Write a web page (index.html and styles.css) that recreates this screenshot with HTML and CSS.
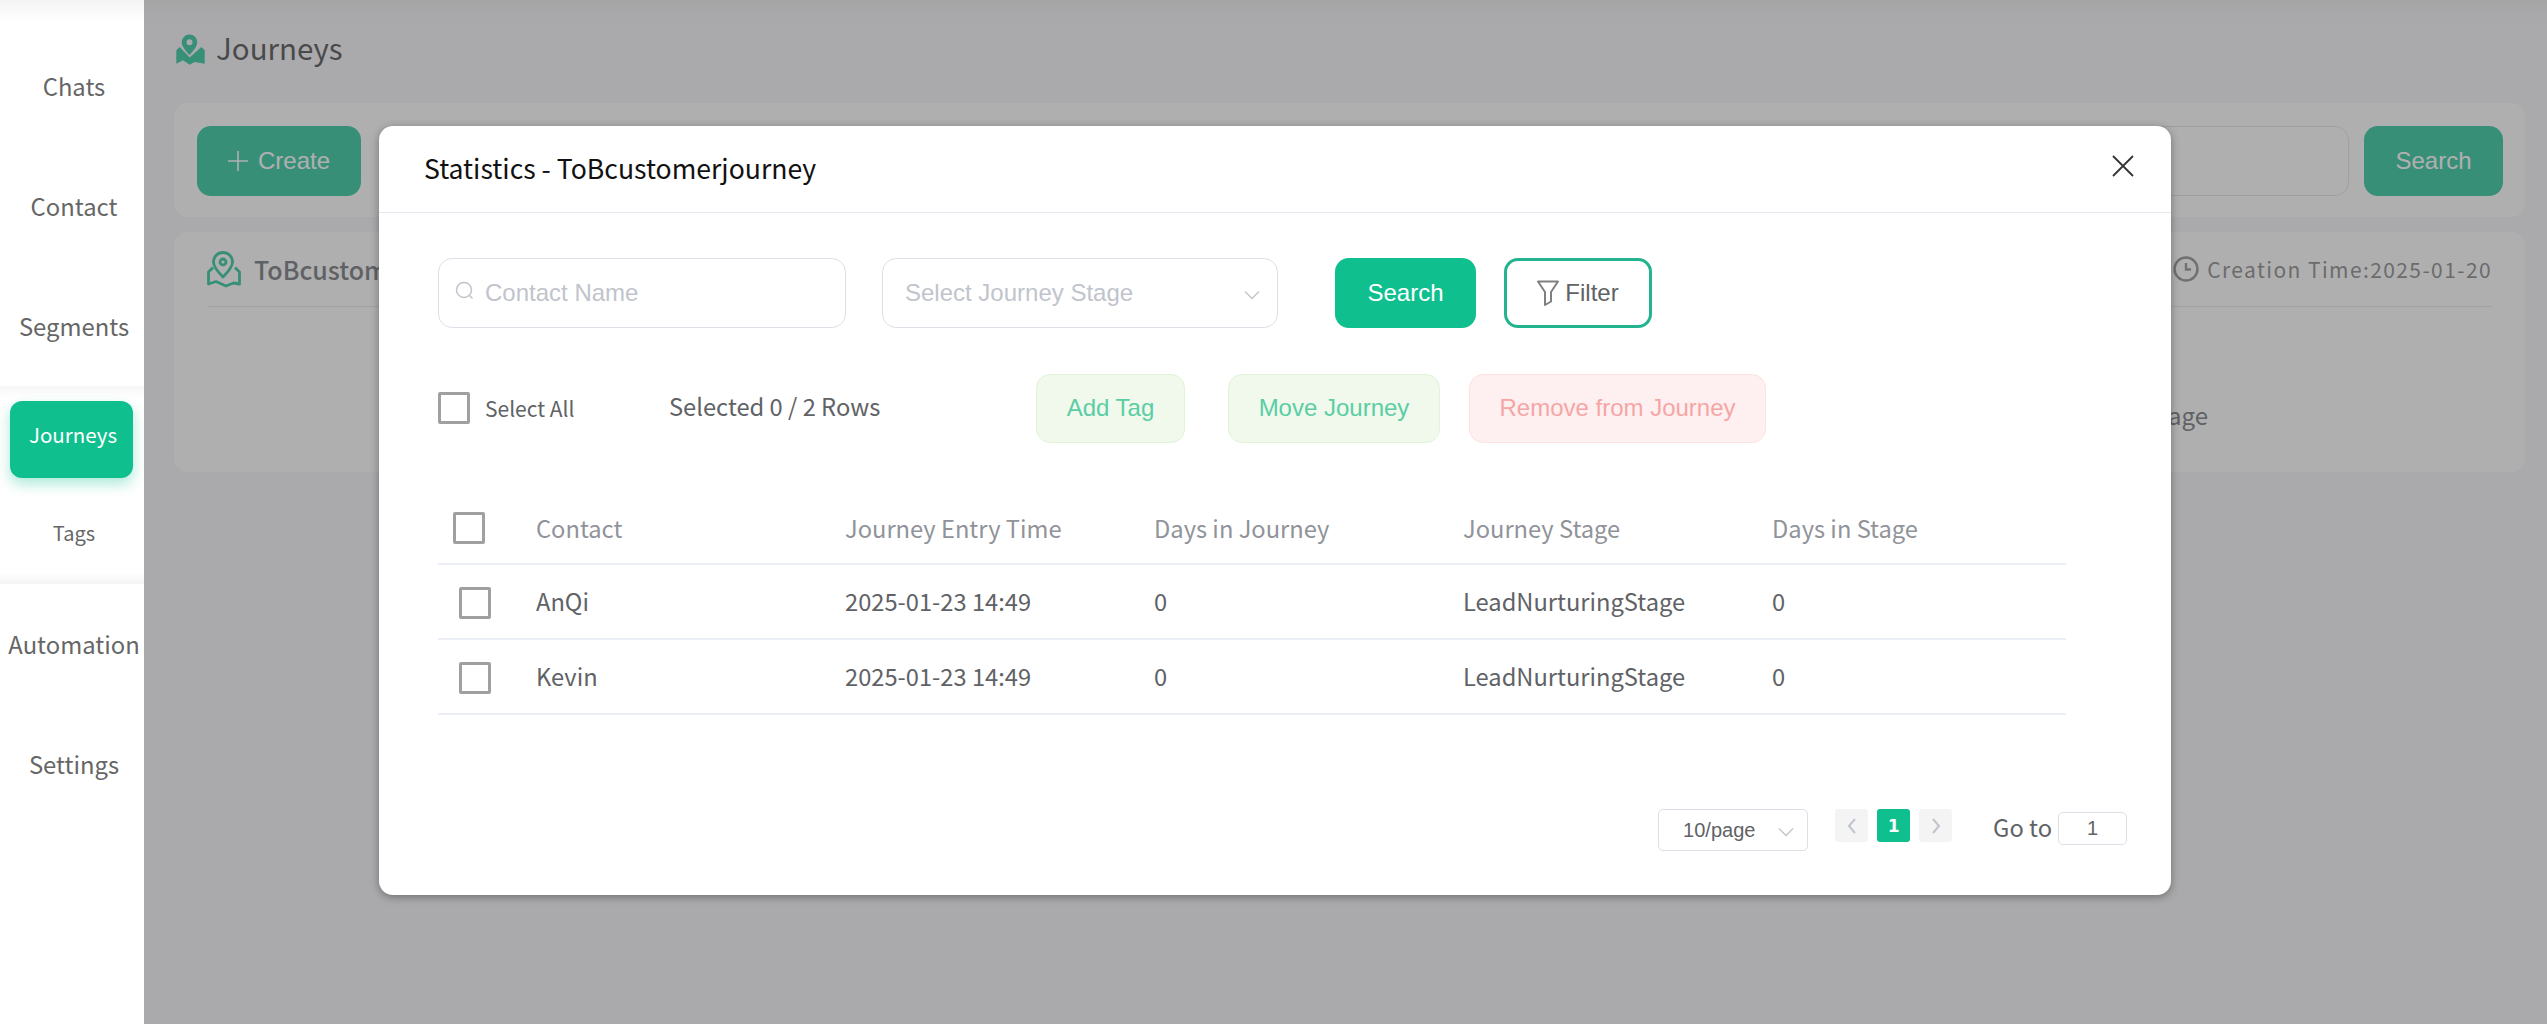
FILE: index.html
```html
<!DOCTYPE html>
<html lang="en">
<head>
    <meta charset="UTF-8">
    <title>Journeys</title>
    <link rel="stylesheet" href="styles.css">
</head>
<body>
    <div class="app">
        <aside class="sidebar">
            <a class="nav-item">Chats</a>
            <a class="nav-item">Contact</a>
            <a class="nav-item">Segments</a>
            <div class="nav-group">
                <a class="nav-pill">Journeys</a>
                <a class="nav-sub">Tags</a>
            </div>
            <a class="nav-item">Automation</a>
            <a class="nav-item">Settings</a>
        </aside>

        <main class="content">
            <div class="page-title">
                <svg class="page-icon" viewBox="0 0 29 31">
                    <path fill="#0fbf8e" fill-rule="evenodd" d="M13.500 0.500a7.800 7.800 0 0 1 7.800 7.800c0 3.500-3.300 8-7.800 12.700C9 16.300 5.700 11.800 5.700 8.300A7.800 7.800 0 0 1 13.500 0.500zm0 4.800a3 3 0 1 0 0 6 3 3 0 0 0 0-6z"/>
                    <path fill="#0fbf8e" d="M3.700 13L13.700 23.500 25.300 13l3.400 3.300v13.400L18.700 28l-5 2.700L7 26.300 0.300 29.700V16.300z"/>
                </svg>
                <span>Journeys</span>
            </div>

            <section class="card toolbar">
                <button class="btn-solid btn-create">
                    <svg class="plus-icon" viewBox="0 0 20 20" fill="none" stroke="#ffffff" stroke-width="1.600">
                        <path d="M10 0v20M0 10h20"/>
                    </svg>
                    Create
                </button>
                <div class="toolbar-right">
                    <div class="toolbar-input"></div>
                    <button class="btn-solid btn-find">Search</button>
                </div>
            </section>

            <section class="card journey">
                <div class="journey-head">
                    <svg class="journey-icon" viewBox="0 0 34 37" fill="none" stroke="#0fbf8e" stroke-width="2.800" stroke-linejoin="round">
                        <path d="M16 1.500a9.500 9.500 0 0 1 9.500 9.500c0 4.500-3.500 9-9.500 15C10 20 6.500 15.500 6.500 11A9.500 9.500 0 0 1 16 1.500z"/>
                        <circle cx="16" cy="11" r="3"/>
                        <path d="M6 16.500L1.500 21V33l7.500-2.500L19 35l7.500-3 6 1V21L28 16.500"/>
                    </svg>
                    <span class="journey-name">ToBcustomerjourney</span>
                    <span class="journey-time">
                        <svg class="clock-icon" viewBox="0 0 26 26" fill="none" stroke="#808080" stroke-width="2.400">
                            <circle cx="13" cy="13" r="11.500"/>
                            <path d="M13 7v6.500h5"/>
                        </svg>
                        Creation Time:2025-01-20
                    </span>
                </div>
                <div class="journey-stage">LeadNurturingStage</div>
            </section>
        </main>

        <div class="overlay">
            <div class="modal">
                <header class="modal-head">
                    <h2 class="modal-title">Statistics - ToBcustomerjourney</h2>
                    <svg class="modal-close" viewBox="0 0 22 22" fill="none" stroke="#333" stroke-width="1.800">
                        <path d="M1 1l20 20M21 1L1 21"/>
                    </svg>
                </header>

                <div class="modal-body">
                    <div class="filter-row">
                        <div class="field field-search">
                            <svg class="field-icon" viewBox="0 0 20 20" fill="none" stroke="#c0c4cc" stroke-width="1.500">
                                <circle cx="9" cy="9" r="7.500"/>
                                <path d="M14.500 14.500l3 3"/>
                            </svg>
                            <span>Contact Name</span>
                        </div>
                        <div class="field field-select">
                            <span>Select Journey Stage</span>
                            <svg class="chevron" viewBox="0 0 16 10" fill="none" stroke="#c0c4cc" stroke-width="1.300">
                                <path d="M1 1.500l7 7 7-7"/>
                            </svg>
                        </div>
                        <button class="btn btn-search">Search</button>
                        <button class="btn btn-filter">
                            <svg class="filter-icon" viewBox="0 0 22 26" fill="none" stroke="#808080" stroke-width="2" stroke-linejoin="round">
                                <path d="M1 1.500h20l-7 10.500v9.500l-6 3.500V12z"/>
                            </svg>
                            Filter
                        </button>
                    </div>

                    <div class="action-row">
                        <label class="select-all"><i class="check"></i>Select All</label>
                        <span class="selected-count">Selected 0 / 2 Rows</span>
                        <button class="btn btn-green btn-tag">Add Tag</button>
                        <button class="btn btn-green btn-move">Move Journey</button>
                        <button class="btn btn-red">Remove from Journey</button>
                    </div>

                    <div class="table">
                        <div class="table-row table-header">
                            <div class="cell-check head-check"><i class="check"></i></div>
                            <div>Contact</div>
                            <div>Journey Entry Time</div>
                            <div>Days in Journey</div>
                            <div>Journey Stage</div>
                            <div>Days in Stage</div>
                        </div>
                        <div class="table-row">
                            <div class="cell-check"><i class="check"></i></div>
                            <div>AnQi</div>
                            <div>2025-01-23 14:49</div>
                            <div>0</div>
                            <div>LeadNurturingStage</div>
                            <div>0</div>
                        </div>
                        <div class="table-row">
                            <div class="cell-check"><i class="check"></i></div>
                            <div>Kevin</div>
                            <div>2025-01-23 14:49</div>
                            <div>0</div>
                            <div>LeadNurturingStage</div>
                            <div>0</div>
                        </div>
                    </div>

                    <div class="pagination">
                        <div class="page-size">
                            <span>10/page</span>
                            <svg class="chevron" viewBox="0 0 16 10" fill="none" stroke="#c0c4cc" stroke-width="1.300">
                                <path d="M1 1.500l7 7 7-7"/>
                            </svg>
                        </div>
                        <div class="pager">
                            <span class="page-btn">
                                <svg viewBox="0 0 10 16" fill="none" stroke="#c0c4cc" stroke-width="2"><path d="M8 1L2 8l6 7"/></svg>
                            </span>
                            <span class="page-btn page-current">1</span>
                            <span class="page-btn">
                                <svg viewBox="0 0 10 16" fill="none" stroke="#c0c4cc" stroke-width="2"><path d="M2 1l6 7-6 7"/></svg>
                            </span>
                        </div>
                        <div class="goto">
                            <span class="goto-label">Go to</span>
                            <span class="goto-input">1</span>
                        </div>
                    </div>
                </div>
            </div>
        </div>
    </div>
</body>
</html>
```

FILE: styles.css
```css
* {
    box-sizing: border-box;
}

body {
    margin: 0;
    height: 100vh;
    overflow: hidden;
    font-family: "Noto Sans CJK SC", "Noto Sans", sans-serif;
    color: #606266;
}

button {
    font-family: "Liberation Sans", Arial, sans-serif;
}

.app {
    display: flex;
    height: 100%;
    position: relative;
}

/* sidebar stays above the overlay */
.sidebar {
    position: relative;
    z-index: 3;
    flex: 0 0 144px;
    padding-top: 27px;
    background: linear-gradient(#f4f4f4, #ffffff 22px);
}

.nav-item {
    display: flex;
    justify-content: center;
    align-items: center;
    height: 120px;
    padding: 0 0 3px 4px;
    font-size: 23.800px;
    color: #666666;
}

.nav-group {
    height: 198px;
    margin-top: -1px;
    margin-bottom: 1px;
    padding-top: 15px;
    background: linear-gradient(#f6f6f6, #ffffff 12px, #ffffff 186px, #f4f4f4);
}

.nav-pill {
    display: flex;
    justify-content: center;
    align-items: center;
    width: 123px;
    height: 77px;
    margin-left: 10px;
    padding: 0 0 12px 3px;
    border-radius: 12px;
    font-size: 20.500px;
    color: #ffffff;
    background-color: #0fbf8e;
    box-shadow: 0 6px 14px rgba(15, 191, 142, 0.35);
}

.nav-sub {
    display: flex;
    justify-content: center;
    align-items: center;
    height: 106px;
    padding: 3px 0 0 4px;
    font-size: 20px;
    color: #666666;
}

.content {
    flex: 1;
    padding: 0 22px 0 30px;
    background: linear-gradient(#ececec, #f4f4f6 24px);
}

.page-title {
    display: flex;
    align-items: center;
    gap: 11px;
    height: 103px;
    padding: 0 0 4px 2px;
    font-size: 29.500px;
    color: #333333;
}

.page-title span {
    margin-bottom: 5px;
}

.page-icon {
    width: 29px;
    height: 31px;
}

.card {
    background-color: #ffffff;
    border-radius: 14px;
}

.toolbar {
    display: flex;
    justify-content: space-between;
    height: 114px;
    padding: 23px 22px;
}

.toolbar-right {
    display: flex;
    gap: 15px;
}

.toolbar-input {
    width: 400px;
    height: 70px;
    border: 1px solid #dcdfe6;
    border-radius: 14px;
}

.btn-solid {
    height: 70px;
    border: none;
    border-radius: 14px;
    font-size: 24px;
    color: #ffffff;
    background-color: #0fbf8e;
}

.btn-create {
    display: flex;
    justify-content: center;
    align-items: center;
    gap: 10px;
    width: 164px;
    padding: 0;
    margin-left: 1px;
}

.plus-icon {
    width: 20px;
    height: 20px;
}

.btn-find {
    width: 139px;
}

.journey {
    height: 240px;
    margin-top: 15px;
    padding: 0 33px;
}

.journey-head {
    display: flex;
    align-items: center;
    height: 75px;
    border-bottom: 1px solid #e4e4e4;
}

.journey-icon {
    width: 34px;
    height: 37px;
    margin-right: 13px;
}

.journey-name {
    flex: 1;
    font-size: 25px;
    font-weight: 500;
    color: #606266;
}

.journey-time {
    display: flex;
    align-items: center;
    gap: 8px;
    font-size: 21px;
    letter-spacing: 1.400px;
    color: #777777;
}

.clock-icon {
    width: 26px;
    height: 26px;
}

.journey-stage {
    margin-top: 90px;
    padding-right: 284px;
    text-align: right;
    font-size: 24px;
}

.overlay {
    position: absolute;
    z-index: 2;
    top: 0;
    right: 0;
    bottom: 0;
    left: 144px;
    padding: 126px 0 0 235px;
    background-color: rgba(95, 95, 97, 0.5);
}

.modal {
    width: 1792px;
    height: 769px;
    border-radius: 14px;
    background-color: #ffffff;
    box-shadow: 0 2px 8px rgba(0, 0, 0, 0.35);
}

.modal-head {
    display: flex;
    justify-content: space-between;
    align-items: center;
    height: 87px;
    padding: 0 37px 0 45px;
    border-bottom: 1px solid #e4e7ed;
}

.modal-title {
    margin: 0 0 3px;
    font-size: 26.600px;
    font-weight: 400;
    color: #111111;
}

.modal-close {
    width: 22px;
    height: 22px;
    margin-bottom: 6px;
}

.modal-body {
    padding: 45px 44px 0 59px;
}

.filter-row {
    display: flex;
    align-items: stretch;
    height: 70px;
}

.field {
    display: flex;
    align-items: center;
    border: 1px solid #dcdfe6;
    border-radius: 14px;
    font-family: "Liberation Sans", Arial, sans-serif;
    font-size: 24px;
    color: #c0c4cc;
}

.field-search {
    width: 408px;
    padding-left: 16px;
}

.field-icon {
    width: 20px;
    height: 20px;
    margin: 0 10px 4px 0;
}

.field-select {
    justify-content: space-between;
    width: 396px;
    margin-left: 36px;
    padding: 0 17px 0 22px;
}

.chevron {
    width: 16px;
    height: 10px;
    margin-top: 4px;
}

.btn {
    border-radius: 14px;
    font-size: 24px;
}

.btn-search {
    width: 141px;
    margin-left: 57px;
    border: none;
    color: #ffffff;
    background-color: #0fbf8e;
}

.btn-filter {
    display: flex;
    justify-content: center;
    align-items: center;
    gap: 6px;
    width: 148px;
    margin-left: 28px;
    padding: 0;
    border: 3px solid #23b48f;
    color: #606266;
    background-color: #ffffff;
}

.filter-icon {
    width: 22px;
    height: 26px;
}

.action-row {
    display: flex;
    align-items: center;
    height: 70px;
    margin-top: 45px;
}

.select-all {
    display: flex;
    align-items: center;
    width: 231px;
    font-size: 21px;
}

.check {
    display: block;
    width: 32px;
    height: 32px;
    border: 3px solid #a0a0a0;
    border-radius: 2px;
    background-color: #ffffff;
}

.select-all .check {
    margin-right: 15px;
}

.selected-count {
    width: 367px;
    padding-bottom: 5px;
    font-size: 23.700px;
}

.btn-green,
.btn-red {
    height: 69px;
    padding: 0;
}

.btn-green {
    border: 1px solid #e1f3d8;
    color: #5bcda5;
    background-color: #f0f9eb;
}

.btn-tag {
    width: 149px;
}

.btn-move {
    width: 212px;
    margin-left: 43px;
}

.btn-red {
    width: 297px;
    margin-left: 29px;
    border: 1px solid #fde2e2;
    color: #f6a5a5;
    background-color: #fef0f0;
}

.table {
    width: 1628px;
    margin-top: 49px;
    font-size: 23.700px;
}

.table-row {
    display: grid;
    grid-template-columns: 98px 309px 309px 309px 309px 1fr;
    align-items: center;
    height: 75px;
    padding-bottom: 2px;
    border-bottom: 2px solid #ebeef5;
}

.table-header {
    height: 73px;
    padding-bottom: 0;
    color: #909399;
}

.cell-check {
    padding: 5px 0 0 21px;
}

.head-check {
    padding: 0 0 0 15px;
}

.pagination {
    display: flex;
    justify-content: flex-end;
    align-items: flex-start;
    margin-top: 94px;
    font-size: 24px;
}

.page-size {
    display: flex;
    justify-content: space-between;
    align-items: center;
    flex: 0 0 150px;
    height: 42px;
    padding: 0 13px 0 24px;
    border: 1px solid #dcdfe6;
    border-radius: 5px;
    font-family: "Liberation Sans", Arial, sans-serif;
    font-size: 20px;
}

.pager {
    display: flex;
    gap: 9px;
    margin-left: 27px;
}

.page-btn {
    display: flex;
    justify-content: center;
    align-items: center;
    width: 33px;
    height: 33px;
    border-radius: 3px;
    background-color: #f4f4f5;
}

.page-btn svg {
    width: 10px;
    height: 16px;
}

.page-current {
    font-family: "DejaVu Sans", sans-serif;
    font-size: 17px;
    font-weight: 700;
    color: #ffffff;
    background-color: #0fbf8e;
}

.goto {
    display: flex;
    align-items: center;
    gap: 6px;
    height: 33px;
    margin: 3px 0 0 41px;
}

.goto-label {
    padding-bottom: 4px;
    white-space: nowrap;
    font-size: 23.700px;
}

.goto-input {
    display: flex;
    justify-content: center;
    align-items: center;
    width: 69px;
    height: 33px;
    border: 1px solid #dcdfe6;
    border-radius: 5px;
    font-family: "Liberation Sans", Arial, sans-serif;
    font-size: 20px;
}
```
